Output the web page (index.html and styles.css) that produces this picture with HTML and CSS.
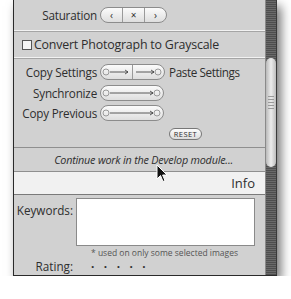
FILE: index.html
```html
<!DOCTYPE html>
<html lang="en">
<head>
    <meta charset="UTF-8">
    <title>Quick Develop</title>
    <link rel="stylesheet" href="styles.css">
</head>
<body>
    <div class="window">
        <div class="panel">
            <div class="row sat">
                <span class="label">Saturation</span>
                <div class="pill">
                    <span class="seg">&lsaquo;</span>
                    <span class="seg">&times;</span>
                    <span class="seg">&rsaquo;</span>
                </div>
            </div>
            <div class="row check">
                <span class="box"></span>
                <span>Convert Photograph to Grayscale</span>
            </div>
            <div class="sync">
                <div class="row line">
                    <span class="label">Copy Settings</span>
                    <div class="pill wide">
                        <span class="seg">
                            <svg width="29" height="10" viewBox="0 0 29 10"><circle cx="4" cy="5" r="3" fill="none" stroke="#999"/><path d="M8 5H26M23 3L26 5L23 7" fill="none" stroke="#333" stroke-width="0.8"/></svg>
                        </span>
                        <span class="seg">
                            <svg width="29" height="10" viewBox="0 0 29 10"><path d="M2 5H20M17 3L20 5L17 7" fill="none" stroke="#333" stroke-width="0.8"/><circle cx="24" cy="5" r="3" fill="none" stroke="#999"/></svg>
                        </span>
                    </div>
                    <span class="after">Paste Settings</span>
                </div>
                <div class="row line">
                    <span class="label">Synchronize</span>
                    <div class="pill wide">
                        <span class="seg">
                            <svg width="60" height="10" viewBox="0 0 60 10"><circle cx="4" cy="5" r="3" fill="none" stroke="#999"/><path d="M8 5H51M48 3L51 5L48 7" fill="none" stroke="#333" stroke-width="0.8"/><circle cx="55" cy="5" r="3" fill="none" stroke="#999"/></svg>
                        </span>
                    </div>
                </div>
                <div class="row line">
                    <span class="label">Copy Previous</span>
                    <div class="pill wide">
                        <span class="seg">
                            <svg width="60" height="10" viewBox="0 0 60 10"><circle cx="4" cy="5" r="3" fill="none" stroke="#999"/><path d="M8 5H51M48 3L51 5L48 7" fill="none" stroke="#333" stroke-width="0.8"/><circle cx="55" cy="5" r="3" fill="none" stroke="#999"/></svg>
                        </span>
                    </div>
                </div>
                <div class="reset-row">
                    <span class="reset">RESET</span>
                </div>
            </div>
            <div class="row develop">Continue work in the Develop module...</div>
            <div class="header">Info</div>
            <div class="info">
                <div class="kw">
                    <span class="label">Keywords:</span>
                    <div class="textbox"></div>
                </div>
                <div class="note">* used on only some selected images</div>
                <div class="rating">
                    <span class="label">Rating:</span>
                    <span class="dots">&middot;&middot;&middot;&middot;&middot;</span>
                </div>
            </div>
        </div>
        <div class="scrollbar">
            <div class="thumb">
                <div class="grip"></div>
            </div>
        </div>
    </div>
    <svg class="cursor" width="12" height="19" viewBox="0 0 12 19">
        <path d="M1 1V15L4.5 11.5L7 17.5L9 16.6L6.6 11H11Z" fill="#111" stroke="#fff" stroke-width="1"/>
    </svg>
</body>
</html>
```

FILE: styles.css
```css
body {
    margin: 0;
    background-color: #fff;
    font-family: "Open Sans", sans-serif;
    color: #2e2e2e;
    position: relative;
}
.window {
    display: flex;
    width: 264px;
    height: 276px;
    margin-left: 13px;
    border-left: 1px solid #2a2a2a;
    border-bottom: 1px solid #2a2a2a;
    box-shadow: 4px 6px 10px rgba(0, 0, 0, 0.55);
    box-sizing: border-box;
    overflow: hidden;
}
.panel {
    width: 252px;
    background-color: #d1d1d1;
    border-right: 1px solid #8a8a8a;
    display: flex;
    flex-direction: column;
}
.row {
    display: flex;
    align-items: center;
    font-size: 11.7px;
    letter-spacing: -0.2px;
}
.label {
    width: 83px;
    text-align: right;
    padding-right: 3px;
    flex-shrink: 0;
}
.sat {
    height: 30px;
    border-bottom: 1px solid #f2f2f2;
    box-shadow: 0 1px 0 #a5a5a5;
}
.pill {
    display: flex;
    height: 14px;
    border: 1px solid #8c8c8c;
    border-radius: 8px;
    background: linear-gradient(#fbfbfb, #dedede);
    overflow: hidden;
}
.seg {
    display: flex;
    align-items: center;
    justify-content: center;
    width: 21px;
    font-size: 10px;
    line-height: 14px;
    border-left: 1px solid #9a9a9a;
}
.seg:first-child {
    border-left: none;
}
.wide .seg {
    width: auto;
    padding: 0 1px;
}
.after {
    margin-left: 4px;
    letter-spacing: -0.4px;
}
.check {
    height: 25px;
    padding-left: 8px;
    border-bottom: 1px solid #f2f2f2;
    box-shadow: 0 1px 0 #a5a5a5;
    margin-top: 1px;
    font-size: 12.4px;
}
.box {
    width: 8px;
    height: 8px;
    border: 1px solid #555;
    background: #f4f4f4;
    margin-right: 2px;
}
.sync {
    padding-top: 3px;
    height: 85px;
    border-bottom: 1px solid #8f8f8f;
    margin-top: 1px;
}
.line {
    height: 20.5px;
}
.reset-row {
    display: flex;
    justify-content: flex-end;
    padding-right: 63px;
    margin-top: 4px;
}
.reset {
    font-size: 7.5px;
    letter-spacing: 0.4px;
    padding: 0 4px;
    height: 10px;
    line-height: 10px;
    border: 1px solid #777;
    border-radius: 6px;
    background: linear-gradient(#fdfdfd, #dcdcdc);
}
.develop {
    height: 23px;
    justify-content: center;
    font-size: 10.8px;
    font-style: italic;
    border-bottom: 1px solid #8f8f8f;
    padding-left: 8px;
}
.header {
    height: 22px;
    background-color: #f1f1f1;
    border-bottom: 1px solid #7a7a7a;
    text-align: right;
    font-size: 13px;
    line-height: 22px;
    padding-right: 10px;
}
.info {
    flex: 1;
    padding-top: 3px;
}
.kw {
    display: flex;
    align-items: flex-start;
    font-size: 11.7px;
}
.kw .label {
    width: 59px;
    padding-top: 4px;
}
.textbox {
    width: 177px;
    height: 46px;
    background-color: #fff;
    border: 1px solid #8a8a8a;
}
.note {
    font-size: 8.5px;
    color: #555;
    padding-left: 77px;
    margin-top: 1px;
}
.rating {
    display: flex;
    font-size: 11.7px;
    margin-top: 0;
}
.rating .label {
    width: 59px;
}
.dots {
    margin-left: 15px;
    letter-spacing: 9.5px;
    font-weight: bold;
}
.scrollbar {
    width: 10px;
    background: repeating-linear-gradient(#4e4e4e 0, #4e4e4e 1px, #6a6a6a 1px, #6a6a6a 2px);
    padding-top: 58px;
    border-right: 1px solid #3a3a3a;
}
.thumb {
    height: 109px;
    border-radius: 5px;
    background: linear-gradient(90deg, #b9b9b9, #ececec 50%, #bdbdbd);
    display: flex;
    align-items: center;
    justify-content: center;
}
.grip {
    width: 6px;
    height: 14px;
    margin-top: -20px;
    background: repeating-linear-gradient(#9a9a9a 0, #9a9a9a 1px, transparent 1px, transparent 3px);
}
.cursor {
    position: absolute;
    left: 156px;
    top: 164px;
}
```
